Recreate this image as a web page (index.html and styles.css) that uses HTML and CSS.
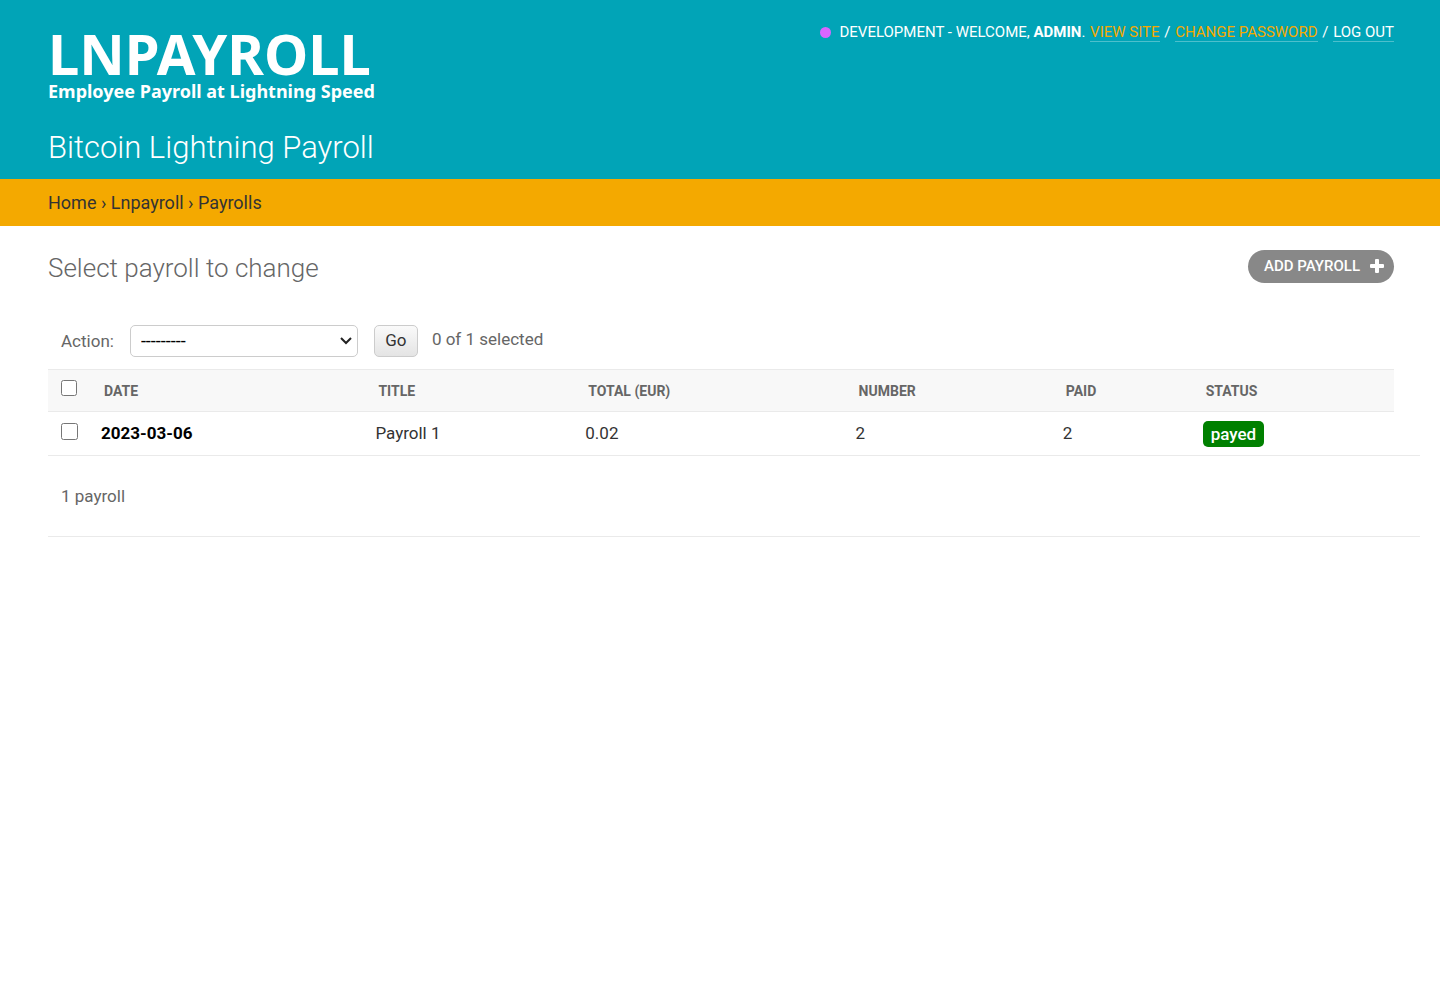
FILE: index.html
```html
<!DOCTYPE html>
<html lang="en">
<head>
<meta charset="utf-8">
<meta name="viewport" content="width=device-width, initial-scale=1">
<title>Select payroll to change | Bitcoin Lightning Payroll</title>
<link rel="stylesheet" href="styles.css">
</head>
<body>
<header class="header">
  <div class="branding">
    <a class="logo" href="#">
      <span class="logo-name">LNPAYROLL</span>
      <span class="logo-tagline">Employee Payroll at Lightning Speed</span>
    </a>
    <h1 class="site-name">Bitcoin Lightning Payroll</h1>
  </div>
  <div class="user-tools">
    <span class="env-dot"></span>Development - Welcome, <strong>admin</strong>.
    <a class="tool-link accent" href="#">View site</a> /
    <a class="tool-link accent" href="#">Change password</a> /
    <a class="tool-link" href="#">Log out</a>
  </div>
</header>
<nav class="breadcrumbs" aria-label="Breadcrumbs">
  <a href="#">Home</a> › <a href="#">Lnpayroll</a> › <a href="#">Payrolls</a>
</nav>
<main class="content">
  <div class="title-row">
    <h2 class="page-title">Select payroll to change</h2>
    <a class="add-link" href="#">Add payroll
      <svg class="add-icon" viewBox="0 0 14 14" aria-hidden="true"><path d="M6 0h2q1 0 1 1v4h4q1 0 1 1v2q0 1-1 1H9v4q0 1-1 1H6q-1 0-1-1V9H1Q0 9 0 8V6q0-1 1-1h4V1q0-1 1-1z"/></svg>
    </a>
  </div>
  <form class="changelist" action="#">
    <div class="actions">
      <label for="action">Action:</label>
      <span class="select-box">
        <select id="action" class="action-select"><option>---------</option></select>
        <svg class="chevron" viewBox="0 0 12 8" aria-hidden="true"><path d="M1 1l5 5 5-5"/></svg>
      </span>
      <button class="go" type="button">Go</button>
      <span class="counter">0 of 1 selected</span>
    </div>
    <table class="results">
      <colgroup>
        <col class="col-check"><col class="col-date"><col class="col-title"><col class="col-total">
        <col class="col-number"><col class="col-paid"><col class="col-status"><col class="col-end">
      </colgroup>
      <thead>
        <tr>
          <th scope="col" class="check"><input type="checkbox" class="tick" aria-label="Select all"></th>
          <th scope="col">Date</th><th scope="col">Title</th><th scope="col">Total (EUR)</th>
          <th scope="col">Number</th><th scope="col">Paid</th><th scope="col">Status</th>
        </tr>
      </thead>
      <tbody>
        <tr>
          <td class="check"><input type="checkbox" class="tick" aria-label="Select 2023-03-06"></td>
          <td><a class="row-link" href="#">2023-03-06</a></td>
          <td>Payroll 1</td><td>0.02</td><td>2</td><td>2</td>
          <td class="status"><span class="badge">payed</span></td><td></td>
        </tr>
      </tbody>
    </table>
    <p class="paginator">1 payroll</p>
  </form>
</main>
</body>
</html>
```
FILE: styles.css
```css
* { box-sizing: border-box; }
body {
  margin: 0;
  background: #fff;
  color: #333;
  font-family: Roboto, "Liberation Sans", sans-serif;
  font-size: 17px;
  line-height: 24px;
}
a { color: inherit; text-decoration: none; }
h1, h2, p { margin: 0; }

.header {
  display: flex;
  justify-content: space-between;
  align-items: flex-start;
  padding: 20px 46px 11px 48px;
  background: #01a4b7;
  color: #fff;
}
.logo {
  display: block;
  padding-top: 5px;
  font-family: "Noto Sans", sans-serif;
  font-weight: 700;
}
.logo-name { display: block; font-size: 56px; line-height: 56px; }
.logo-tagline { display: block; font-size: 18px; line-height: 20px; }
.site-name { margin-top: 27px; font-size: 31px; line-height: 40px; font-weight: 300; }

.user-tools {
  font-size: 15px;
  line-height: 24px;
  text-transform: uppercase;
}
.user-tools strong { font-weight: 700; }
.env-dot {
  display: inline-block;
  width: 11px;
  height: 11px;
  margin-right: 8px;
  border-radius: 50%;
  background: #d966ff;
  vertical-align: -1px;
}
.tool-link { margin-left: 1px; border-bottom: 1px solid rgba(255, 255, 255, .3); }
.accent { margin-right: 1px; color: #f4a900; }

.breadcrumbs {
  padding: 12px 48px 11px;
  background: #f4a900;
  font-size: 18px;
}

.content { padding: 24px 20px 40px 48px; }
.title-row {
  display: flex;
  justify-content: space-between;
  align-items: flex-start;
  padding-right: 26px;
}
.page-title {
  padding-top: 2px;
  color: #666;
  font-size: 26px;
  line-height: 32px;
  font-weight: 300;
}
.add-link {
  display: flex;
  align-items: center;
  gap: 10px;
  padding: 4px 10px 5px 16px;
  border-radius: 17px;
  background: #888;
  color: #fff;
  font-size: 15px;
  font-weight: 500;
  text-transform: uppercase;
}
.add-icon { width: 14px; height: 14px; fill: #fff; }

.actions {
  display: flex;
  align-items: center;
  margin-top: 41px;
  padding: 0 13px 12px;
  color: #666;
}
.select-box {
  position: relative;
  margin: 0 16px;
}
.action-select {
  display: block;
  appearance: none;
  width: 228px;
  height: 32px;
  padding: 0 10px 2px;
  border: 1px solid #ccc;
  border-radius: 5px;
  background: #fff;
  color: #000;
  font: 400 18px Roboto, sans-serif;
}
.chevron {
  position: absolute;
  top: 12px;
  right: 6px;
  width: 12px;
  height: 8px;
  fill: none;
  stroke: #222;
  stroke-width: 2;
  pointer-events: none;
}
.go {
  width: 44px;
  height: 32px;
  padding: 0 0 2px;
  border: 1px solid #ccc;
  border-radius: 5px;
  background: linear-gradient(#fafafa, #e4e4e4);
  color: #333;
  font: 400 17px Roboto, sans-serif;
}
.counter { margin-left: 14px; padding-bottom: 4px; }

.results {
  width: 100%;
  table-layout: fixed;
  border-collapse: collapse;
}
.col-check { width: 43px; }
.col-date { width: 20%; }
.col-title { width: 15.3%; }
.col-total { width: 19.7%; }
.col-number { width: 15.1%; }
.col-paid { width: 10.2%; }
.col-end { width: 26px; }
.results th {
  height: 42px;
  padding: 0 13px;
  border-top: 1px solid #eaeaea;
  border-bottom: 1px solid #eaeaea;
  background: #f8f8f8;
  color: #666;
  font-size: 14px;
  font-weight: 700;
  text-align: left;
  text-transform: uppercase;
}
.results td {
  height: 44px;
  padding: 0 10px 2px;
  border-bottom: 1px solid #eaeaea;
}
.results .status { padding-bottom: 0; }
.results .check { padding: 0 0 0 13px; line-height: 0; }
.tick { width: 16px; height: 16px; margin: 0 0 5px; }
.results td .tick { width: 17px; height: 17px; }
.row-link { color: #000; font-weight: 700; }
.badge {
  display: inline-block;
  padding: 1px 8px;
  border-radius: 5px;
  background: green;
  color: #fff;
  font-weight: 500;
}
.paginator {
  padding: 28px 13px;
  border-bottom: 1px solid #eaeaea;
  color: #666;
}
```
